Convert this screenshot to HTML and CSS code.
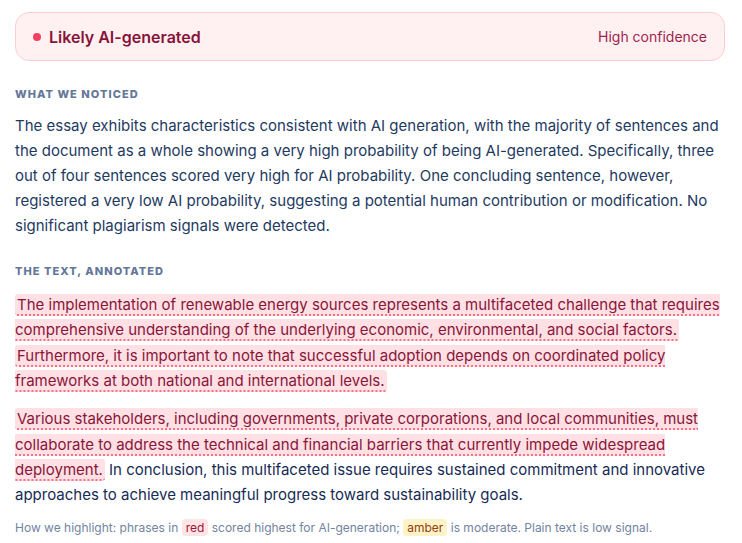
FILE: index.html
```html
<!DOCTYPE html>
<html lang="en">
<head>
<meta charset="utf-8">
<title>AI detection result</title>
<link rel="stylesheet" href="styles.css">
</head>
<body>
<div class="page">
  <div class="verdict">
    <div class="verdict-title"><span class="dot"></span>Likely AI-generated</div>
    <div class="verdict-conf">High confidence</div>
  </div>

  <h2 class="label">What we noticed</h2>
  <p class="summary">The essay exhibits characteristics consistent with AI generation, with the majority of sentences and the document as a whole showing a very high probability of being AI-generated. Specifically, three out of four sentences scored very high for AI probability. One concluding sentence, however, registered a very low AI probability, suggesting a potential human contribution or modification. No significant plagiarism signals were detected.</p>

  <h2 class="label label-second">The text, annotated</h2>
  <div class="annotated">
    <p class="para"><span class="hl-red">The implementation of renewable energy sources represents a multifaceted challenge that requires comprehensive understanding of the underlying economic, environmental, and social factors.</span> <span class="hl-red">Furthermore, it is important to note that successful adoption depends on coordinated policy frameworks at both national and international levels.</span></p>
    <p class="para"><span class="hl-red">Various stakeholders, including governments, private corporations, and local communities, must collaborate to address the technical and financial barriers that currently impede widespread deployment.</span> In conclusion, this multifaceted issue requires sustained commitment and innovative approaches to achieve meaningful progress toward sustainability goals.</p>
  </div>

  <p class="legend">How we highlight: phrases in <span class="chip chip-red">red</span> scored highest for AI-generation; <span class="chip chip-amber">amber</span> is moderate. Plain text is low signal.</p>
</div>
</body>
</html>
```

FILE: styles.css
```css
html, body {
  margin: 0;
  padding: 0;
  background: #ffffff;
}

body {
  font-family: Inter, "Noto Sans", "Liberation Sans", sans-serif;
  color: #1e3a5f;
}

.page {
  padding: 12px 17px 0 15px;
}

.verdict {
  display: flex;
  align-items: center;
  justify-content: space-between;
  height: 47px;
  padding: 0 17px 0 17px;
  background: #fff0f2;
  border: 1px solid #fecdd3;
  border-radius: 14px;
}

.verdict-title {
  display: flex;
  align-items: center;
  gap: 8px;
  font-size: 16px;
  font-weight: 600;
  color: #881337;
}

.dot {
  width: 8px;
  height: 8px;
  border-radius: 50%;
  background: #f43f5e;
}

.verdict-conf {
  font-size: 14px;
  color: #9f1f4c;
}

.label {
  margin: 25px 0 0 0;
  font-size: 11px;
  line-height: 16px;
  font-weight: 800;
  letter-spacing: 0.095em;
  text-transform: uppercase;
  color: #64779a;
}

.label-second {
  margin-top: 25px;
}

.summary {
  margin: 11px 0 0 0;
  font-size: 15px;
  line-height: 25px;
  color: #1e3a5f;
}

.annotated {
  margin-top: 13px;
}

.para {
  margin: 0 0 12.5px 0;
  font-size: 15px;
  line-height: 25.4px;
  color: #172b55;
}

.para:last-child {
  margin-bottom: 0;
}

.hl-red {
  background: #ffe0e4;
  color: #8a1538;
  padding: 1px 2px 0 2px;
  border-radius: 3px;
  border-bottom: 2px dotted #fb7185;
}

.legend {
  margin: 11px 0 0 0;
  font-size: 12px;
  line-height: 18px;
  color: #7383a0;
}

.chip {
  padding: 1px 4px;
  border-radius: 4px;
}

.chip-red {
  background: #ffe4e6;
  color: #9f1239;
}

.chip-amber {
  background: #fef3c7;
  color: #92400e;
}
```
